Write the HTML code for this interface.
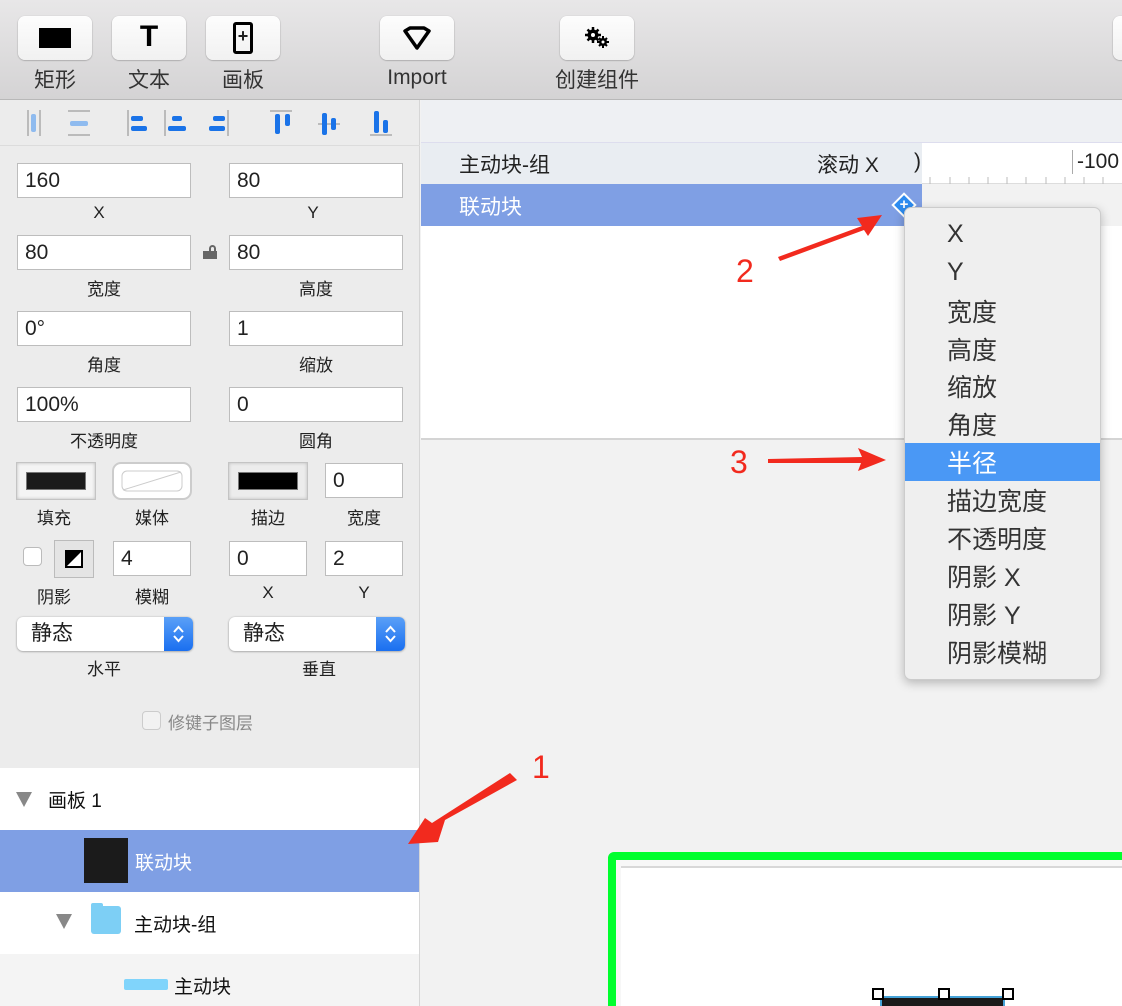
<!DOCTYPE html>
<html style="overflow:hidden;width:1122px;height:1006px"><head><meta charset="utf-8"><style>
*{margin:0;padding:0;box-sizing:border-box}
body{width:1122px;height:1006px;position:relative;overflow:hidden;background:#f2f2f2;font-family:"Liberation Sans","Noto Sans CJK SC",sans-serif;color:#222}
.a{position:absolute}
.tb{left:0;top:0;width:1122px;height:100px;background:linear-gradient(#e8e7e8,#d4d3d4);border-bottom:1px solid #b8b8b8}
.btn{position:absolute;top:16px;width:74px;height:44px;background:linear-gradient(#fdfdfd,#f1f1f1);border-radius:7px;box-shadow:0 0.5px 1.5px rgba(0,0,0,.35)}
.bl{position:absolute;top:64px;font-size:21px;color:#333;text-align:center;width:120px}
.inp{position:absolute;background:#fff;border:1px solid #bdbdbd;height:35px;font-size:21px;padding-left:7px;line-height:33px;color:#222}
.lab{position:absolute;font-size:17px;text-align:center;width:174px;color:#222}
.mi{position:absolute;left:947px;font-size:25px;color:#333}
.tri{width:0;height:0;border-left:8px solid transparent;border-right:8px solid transparent;border-top:15px solid #888;position:absolute}
</style></head><body>
<div class="a tb"></div>
<div class="btn" style="left:18px"><div class="a" style="left:21px;top:12px;width:32px;height:20px;background:#000"></div></div>
<div class="btn" style="left:112px"><div class="a" style="left:0;width:74px;top:4px;text-align:center;font-size:30px;font-weight:bold;color:#000">T</div></div>
<div class="btn" style="left:206px"><div class="a" style="left:27px;top:6px;width:20px;height:32px;border:3px solid #000;border-radius:3px;text-align:center;font-size:18px;line-height:22px;font-weight:bold">+</div></div>
<div class="btn" style="left:380px"><svg class="a" style="left:22px;top:10px" width="30" height="26"><path d="M3 5 L8 2 L22 2 L27 5 L15 22 Z" fill="none" stroke="#000" stroke-width="3.5" stroke-linejoin="round"/></svg></div>
<div class="btn" style="left:560px"><svg class="a" style="left:24px;top:10px" width="28" height="24"><g fill="#000"><circle cx="9" cy="9" r="5.5"/><circle cx="19" cy="16" r="4"/></g><g stroke="#000" stroke-width="2.5"><path d="M9 1v16M1 9h16M3.5 3.5l11 11M14.5 3.5l-11 11"/><path d="M19 10v12M13 16h12M15 12l8 8M23 12l-8 8" stroke-width="2"/></g><circle cx="9" cy="9" r="2" fill="#fff"/><circle cx="19" cy="16" r="1.5" fill="#fff"/></svg></div>
<div class="btn" style="left:1113px"></div>
<div class="bl" style="left:-5px">矩形</div>
<div class="bl" style="left:89px">文本</div>
<div class="bl" style="left:183px">画板</div>
<div class="bl" style="left:357px;top:66px">Import</div>
<div class="bl" style="left:537px">创建组件</div>

<!-- left panel -->
<div class="a" style="left:0;top:100px;width:420px;height:668px;background:#ececec;border-right:1px solid #d6d6d6"></div>
<div class="a" style="left:0;top:145px;width:420px;height:1px;background:#dcdcdc"></div>
<svg class="a" style="left:20px;top:106px" width="380" height="34">
<g fill="#bbb"><rect x="7" y="4" width="2" height="26"/><rect x="19" y="4" width="2" height="26"/><rect x="48" y="4" width="22" height="2"/><rect x="48" y="28" width="22" height="2"/>
<rect x="107" y="4" width="2" height="26"/><rect x="144" y="4" width="2" height="26"/><rect x="207" y="4" width="2" height="26"/><rect x="250" y="4" width="22" height="2"/><rect x="298" y="17" width="22" height="2"/><rect x="350" y="28" width="22" height="2"/></g>
<g fill="#8fbbef"><rect x="11" y="8" width="5" height="18" rx="2"/><rect x="50" y="15" width="18" height="5" rx="2"/></g>
<g fill="#1a73e8"><rect x="111" y="10" width="12" height="5" rx="2"/><rect x="111" y="20" width="16" height="5" rx="2"/><rect x="152" y="10" width="10" height="5" rx="2"/><rect x="148" y="20" width="18" height="5" rx="2"/><rect x="193" y="10" width="12" height="5" rx="2"/><rect x="189" y="20" width="16" height="5" rx="2"/>
<rect x="255" y="8" width="5" height="20" rx="2"/><rect x="265" y="8" width="5" height="12" rx="2"/><rect x="302" y="7" width="5" height="22" rx="2"/><rect x="311" y="12" width="5" height="12" rx="2"/><rect x="354" y="5" width="5" height="22" rx="2"/><rect x="363" y="14" width="5" height="13" rx="2"/></g>
</svg>
<div class="inp" style="left:17px;top:163px;width:174px">160</div>
<div class="inp" style="left:229px;top:163px;width:174px">80</div>
<div class="lab" style="left:12px;top:203px">X</div><div class="lab" style="left:226px;top:203px">Y</div>
<div class="inp" style="left:17px;top:235px;width:174px">80</div>
<div class="a" style="left:203px;top:251px;width:14px;height:8px;background:#666"></div><div class="a" style="left:209px;top:245px;width:7px;height:8px;border:2px solid #666;border-bottom:none;border-radius:4px 4px 0 0"></div>
<div class="inp" style="left:229px;top:235px;width:174px">80</div>
<div class="lab" style="left:17px;top:275px">宽度</div><div class="lab" style="left:229px;top:275px">高度</div>
<div class="inp" style="left:17px;top:311px;width:174px">0°</div>
<div class="inp" style="left:229px;top:311px;width:174px">1</div>
<div class="lab" style="left:17px;top:351px">角度</div><div class="lab" style="left:229px;top:351px">缩放</div>
<div class="inp" style="left:17px;top:387px;width:174px">100%</div>
<div class="inp" style="left:229px;top:387px;width:174px">0</div>
<div class="lab" style="left:17px;top:427px">不透明度</div><div class="lab" style="left:229px;top:427px">圆角</div>

<div class="a" style="left:16px;top:462px;width:80px;height:38px;background:#f4f4f4;border:1px solid #c4c4c4;box-shadow:inset 0 0 3px #bbb"><div class="a" style="left:9px;top:9px;width:60px;height:18px;background:#1b1b1b;border:1px solid #777"></div></div>
<div class="a" style="left:112px;top:462px;width:80px;height:38px;background:#fff;border:2px solid #ccc;border-radius:9px"><svg class="a" style="left:7px;top:6px" width="62" height="22"><rect x="1" y="1" width="60" height="20" rx="5" fill="none" stroke="#ccc"/><line x1="2" y1="20" x2="60" y2="2" stroke="#ccc"/></svg></div>
<div class="a" style="left:228px;top:462px;width:80px;height:38px;background:#ececec;border:1px solid #c4c4c4;box-shadow:inset 0 0 3px #bbb"><div class="a" style="left:9px;top:9px;width:60px;height:18px;background:#000;border:1px solid #777"></div></div>
<div class="inp" style="left:325px;top:463px;width:78px">0</div>
<div class="lab" style="left:-33px;top:504px">填充</div><div class="lab" style="left:65px;top:504px">媒体</div><div class="lab" style="left:181px;top:504px">描边</div><div class="lab" style="left:277px;top:504px">宽度</div>
<div class="a" style="left:23px;top:547px;width:19px;height:19px;background:#fff;border:1px solid #bbb;border-radius:4px"></div>
<div class="a" style="left:54px;top:540px;width:40px;height:38px;background:#e4e4e4;border:1px solid #bbb"><svg class="a" style="left:10px;top:9px" width="18" height="18"><rect x="1" y="1" width="16" height="16" fill="#fff" stroke="#000" stroke-width="2"/><path d="M1 1 H17 L1 17Z" fill="#000"/></svg></div>
<div class="inp" style="left:113px;top:541px;width:78px">4</div>
<div class="inp" style="left:229px;top:541px;width:78px">0</div>
<div class="inp" style="left:325px;top:541px;width:78px">2</div>
<div class="lab" style="left:-33px;top:583px">阴影</div><div class="lab" style="left:65px;top:583px">模糊</div><div class="lab" style="left:181px;top:583px">X</div><div class="lab" style="left:277px;top:583px">Y</div>
<div class="a" style="left:17px;top:617px;width:176px;height:34px;background:#fff;border-radius:6px;box-shadow:0 0.5px 2px rgba(0,0,0,.4);font-size:21px;line-height:34px;padding-left:14px">静态<div class="a" style="right:0;top:0;width:29px;height:34px;background:linear-gradient(#5aa0f7,#1a6ff0);border-radius:0 6px 6px 0"><svg class="a" style="left:8px;top:7px" width="13" height="20"><path d="M2 8 L6.5 3 L11 8 M2 12 L6.5 17 L11 12" fill="none" stroke="#fff" stroke-width="2"/></svg></div></div>
<div class="a" style="left:229px;top:617px;width:176px;height:34px;background:#fff;border-radius:6px;box-shadow:0 0.5px 2px rgba(0,0,0,.4);font-size:21px;line-height:34px;padding-left:14px">静态<div class="a" style="right:0;top:0;width:29px;height:34px;background:linear-gradient(#5aa0f7,#1a6ff0);border-radius:0 6px 6px 0"><svg class="a" style="left:8px;top:7px" width="13" height="20"><path d="M2 8 L6.5 3 L11 8 M2 12 L6.5 17 L11 12" fill="none" stroke="#fff" stroke-width="2"/></svg></div></div>
<div class="lab" style="left:17px;top:655px">水平</div><div class="lab" style="left:232px;top:655px">垂直</div>
<div class="a" style="left:142px;top:711px;width:19px;height:19px;border:1px solid #ccc;border-radius:4px;background:#f2f2f2"></div>
<div class="a" style="left:168px;top:709px;font-size:17px;color:#888">修键子图层</div>

<!-- layers -->
<div class="a" style="left:0;top:768px;width:420px;height:238px;background:#fff;border-right:1px solid #d6d6d6"></div>
<div class="tri" style="left:16px;top:792px"></div>
<div class="a" style="left:48px;top:786px;font-size:19px;color:#111">画板 1</div>
<div class="a" style="left:0;top:830px;width:419px;height:62px;background:#7f9fe4"></div>
<div class="a" style="left:84px;top:838px;width:44px;height:45px;background:#1b1b1b"></div>
<div class="a" style="left:135px;top:848px;font-size:19px;color:#fff">联动块</div>
<div class="tri" style="left:56px;top:914px"></div>
<div class="a" style="left:91px;top:906px;width:30px;height:28px;background:#7dcff5;border-radius:3px"></div><div class="a" style="left:91px;top:903px;width:12px;height:6px;background:#7dcff5;border-radius:2px 2px 0 0"></div>
<div class="a" style="left:134px;top:910px;font-size:19px;color:#111">主动块-组</div>
<div class="a" style="left:0;top:954px;width:419px;height:52px;background:#f4f4f4"></div>
<div class="a" style="left:124px;top:979px;width:44px;height:11px;background:#80d4fb;border-radius:2px"></div>
<div class="a" style="left:174px;top:972px;font-size:19px;color:#111">主动块</div>

<!-- right top -->
<div class="a" style="left:421px;top:100px;width:701px;height:43px;background:#eef0f3;border-bottom:1px solid #dde"></div>
<div class="a" style="left:421px;top:143px;width:501px;height:41px;background:#e9edf2"></div>
<div class="a" style="left:459px;top:149px;font-size:21px;color:#222">主动块-组</div>
<div class="a" style="left:817px;top:149px;font-size:21px;color:#222">滚动 X</div>
<div class="a" style="left:922px;top:143px;width:200px;height:41px;background:#fff;border-bottom:1px solid #ddd"></div>
<div class="a" style="left:914px;top:150px;font-size:21px;color:#222">)</div>
<div class="a" style="left:1072px;top:150px;font-size:21px;color:#222;border-left:1px solid #aaa;padding-left:4px">-100</div>
<svg class="a" style="left:922px;top:174px" width="200" height="10"><g stroke="#bbb"><path d="M8 3v7M28 3v7M47 3v7M66 3v7M85 3v7M104 3v7M124 3v7M143 3v7M162 3v7M181 3v7"/></g></svg>
<div class="a" style="left:421px;top:184px;width:501px;height:42px;background:#7f9fe4"></div>
<div class="a" style="left:459px;top:191px;font-size:21px;color:#fff">联动块</div>
<div class="a" style="left:895px;top:196px;width:18px;height:18px;background:#2d8cf0;border:2px solid #fff;transform:rotate(45deg)"></div>
<div class="a" style="left:898px;top:196px;width:12px;height:18px;color:#fff;font-size:15px;font-weight:bold;text-align:center;line-height:18px">+</div>
<div class="a" style="left:421px;top:226px;width:701px;height:214px;background:#fff;border-bottom:2px solid #d4d4d4"></div>

<!-- canvas artboard -->
<div class="a" style="left:608px;top:852px;width:530px;height:200px;border:8px solid #00ff2e;border-radius:6px;background:#f7f7f7"></div>
<div class="a" style="left:621px;top:866px;width:510px;height:180px;background:#fff;border-top:2px solid #d8d8d8"></div>
<div class="a" style="left:880px;top:996px;width:125px;height:20px;background:#1a1a1a;border:2px solid #46a3d8"></div>
<div class="a" style="left:872px;top:988px;width:12px;height:12px;border:2px solid #000;background:#fff"></div>
<div class="a" style="left:938px;top:988px;width:12px;height:12px;border:2px solid #000;background:#fff"></div>
<div class="a" style="left:1002px;top:988px;width:12px;height:12px;border:2px solid #000;background:#fff"></div>

<!-- menu -->
<div class="a" style="left:904px;top:207px;width:197px;height:473px;background:#efefef;border:1px solid #ccc;border-radius:7px;box-shadow:0 3px 10px rgba(0,0,0,.25)"></div>
<div class="a" style="left:905px;top:443px;width:195px;height:38px;background:#4a98f5"></div>
<div class="mi" style="top:220px">X</div>
<div class="mi" style="top:258px">Y</div>
<div class="mi" style="top:293px">宽度</div>
<div class="mi" style="top:331px">高度</div>
<div class="mi" style="top:368px">缩放</div>
<div class="mi" style="top:406px">角度</div>
<div class="mi" style="top:444px;color:#fff">半径</div>
<div class="mi" style="top:482px">描边宽度</div>
<div class="mi" style="top:520px">不透明度</div>
<div class="mi" style="top:558px">阴影 X</div>
<div class="mi" style="top:596px">阴影 Y</div>
<div class="mi" style="top:634px">阴影模糊</div>

<!-- annotations -->
<svg class="a" style="left:0;top:0" width="1122" height="1006">
<g fill="#f22a1e">
<path d="M778 257 L862 226 L857 218 L882 215 L868 236 L864 230 L780 261Z"/>
<path d="M768 459 L862 457 L858 448 L886 460 L858 471 L861 463 L768 463Z"/>
<path d="M513 776 L517 780 L445 820 L438 842 L408 844 L425 818 L432 823 L510 773Z"/>
</g>
<g fill="#f22a1e" font-family="Liberation Sans" font-size="32"><text x="736" y="282">2</text><text x="730" y="473">3</text><text x="532" y="778">1</text></g>
</svg>
</body></html>
